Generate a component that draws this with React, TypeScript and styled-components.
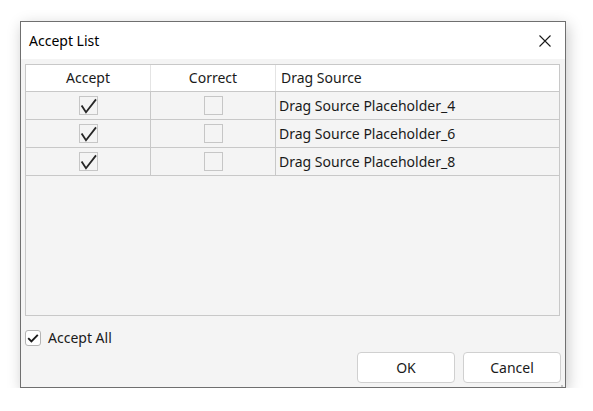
import React from 'react';
import styled, { createGlobalStyle } from 'styled-components';

const GlobalStyle = createGlobalStyle`
  html, body {
    margin: 0;
    padding: 0;
    background: #ffffff;
  }
  body {
    font-family: "Segoe UI", "Noto Sans", "Open Sans", sans-serif;
    color: #1a1a1a;
  }
`;

type Row = { accept: boolean; correct: boolean; source: string };

const rows: Row[] = [
  { accept: true, correct: false, source: 'Drag Source Placeholder_4' },
  { accept: true, correct: false, source: 'Drag Source Placeholder_6' },
  { accept: true, correct: false, source: 'Drag Source Placeholder_8' },
];

const CheckMark = () => (
  <svg width="17" height="17" viewBox="0 0 17 17">
    <path d="M1.6 8.4 L6 15.2 L16 2.4" fill="none" stroke="#262626" strokeWidth="1.8" />
  </svg>
);

const SmallCheck = () => (
  <svg width="14" height="14" viewBox="0 0 14 14">
    <path d="M2.2 7.2 L5.4 10.4 L11.8 3.8" fill="none" stroke="#1a1a1a" strokeWidth="1.9" />
  </svg>
);

const App = () => {
  return (
    <>
      <GlobalStyle />
      <Window>
        <TitleBar>
          <Title>Accept List</Title>
          <CloseButton>
            <svg width="12" height="12" viewBox="0 0 12 12">
              <path d="M0.5 0.5 L11.5 11.5 M11.5 0.5 L0.5 11.5" stroke="#1a1a1a" strokeWidth="1.1" />
            </svg>
          </CloseButton>
        </TitleBar>

        <Body>
          <Table>
            <HeaderRow>
              <HeadCell $center>Accept</HeadCell>
              <HeadCell $center>Correct</HeadCell>
              <HeadCell>Drag Source</HeadCell>
            </HeaderRow>
            {rows.map((r) => (
              <DataRow key={r.source}>
                <Cell $center>
                  <GridBox>{r.accept && <CheckMark />}</GridBox>
                </Cell>
                <Cell $center>
                  <GridBox>{r.correct && <CheckMark />}</GridBox>
                </Cell>
                <Cell>{r.source}</Cell>
              </DataRow>
            ))}
          </Table>

          <AcceptAll>
            <RoundBox>
              <SmallCheck />
            </RoundBox>
            Accept All
          </AcceptAll>

          <Buttons>
            <Button>OK</Button>
            <Button>Cancel</Button>
          </Buttons>
        </Body>

        <Grip>
          <svg width="10" height="10" viewBox="0 0 10 10">
            <rect x="7" y="1" width="2" height="2" fill="#c4c4c4" />
            <rect x="4" y="4" width="2" height="2" fill="#c4c4c4" />
            <rect x="7" y="4" width="2" height="2" fill="#c4c4c4" />
            <rect x="1" y="7" width="2" height="2" fill="#c4c4c4" />
            <rect x="4" y="7" width="2" height="2" fill="#c4c4c4" />
            <rect x="7" y="7" width="2" height="2" fill="#c4c4c4" />
          </svg>
        </Grip>
      </Window>
    </>
  );
};

export default App;

const Window = styled.div`
  position: relative;
  margin: 21px 0 0 20px;
  width: 546px;
  height: 367px;
  box-sizing: border-box;
  border: 1px solid #6f6f6f;
  background: #f4f4f4;
  box-shadow: 2px 4px 14px rgba(0, 0, 0, 0.22);
  display: flex;
  flex-direction: column;
`;

const TitleBar = styled.div`
  height: 37px;
  background: #ffffff;
  display: flex;
  align-items: center;
  justify-content: space-between;
  padding: 0 14px 0 8px;
`;

const Title = styled.span`
  font-size: 14px;
  color: #000;
  padding-bottom: 1px;
`;

const CloseButton = styled.div`
  width: 12px;
  height: 12px;
  display: flex;
`;

const Body = styled.div`
  flex: 1;
  display: flex;
  flex-direction: column;
  padding: 5px 4px 4px 4px;
`;

const Table = styled.div`
  height: 252px;
  box-sizing: border-box;
  margin-right: 1px;
  border: 1px solid #c8c8c8;
  background: #f4f4f4;
`;

const HeaderRow = styled.div`
  display: grid;
  grid-template-columns: 125px 125px 1fr;
  height: 27px;
  box-sizing: border-box;
  background: #ffffff;
  border-bottom: 1px solid #c8c8c8;
`;

const HeadCell = styled.div<{ $center?: boolean }>`
  display: flex;
  align-items: center;
  justify-content: ${(p) => (p.$center ? 'center' : 'flex-start')};
  padding-left: ${(p) => (p.$center ? '0' : '5px')};
  padding-bottom: 2px;
  font-size: 14px;
  color: #1a1a1a;
  border-right: 1px solid #e4e4e4;
  &:last-child {
    border-right: none;
  }
`;

const DataRow = styled.div`
  display: grid;
  grid-template-columns: 125px 125px 1fr;
  height: 28px;
  box-sizing: border-box;
  border-bottom: 1px solid #c8c8c8;
`;

const Cell = styled.div<{ $center?: boolean }>`
  display: flex;
  align-items: center;
  justify-content: ${(p) => (p.$center ? 'center' : 'flex-start')};
  padding-left: ${(p) => (p.$center ? '0' : '3px')};
  font-size: 14px;
  color: #1a1a1a;
  border-right: 1px solid #c8c8c8;
  &:last-child {
    border-right: none;
  }
`;

const GridBox = styled.div`
  width: 19px;
  height: 19px;
  box-sizing: border-box;
  border: 1px solid #c6c6c6;
  display: flex;
  align-items: center;
  justify-content: center;
`;

const AcceptAll = styled.div`
  display: flex;
  align-items: center;
  gap: 7px;
  margin-top: 12px;
  font-size: 14px;
  color: #1a1a1a;
`;

const RoundBox = styled.div`
  width: 16px;
  height: 16px;
  box-sizing: border-box;
  border: 1px solid #b4b4b4;
  border-radius: 3px;
  background: #ffffff;
  display: flex;
  align-items: center;
  justify-content: center;
`;

const Buttons = styled.div`
  margin-top: auto;
  display: flex;
  justify-content: flex-end;
  gap: 8px;
`;

const Button = styled.div`
  width: 98px;
  height: 31px;
  box-sizing: border-box;
  border: 1px solid #d0d0d0;
  border-radius: 4px;
  background: #ffffff;
  display: flex;
  align-items: center;
  justify-content: center;
  font-size: 14px;
  color: #1a1a1a;
`;

const Grip = styled.div`
  position: absolute;
  right: 1px;
  bottom: 0px;
  width: 10px;
  height: 10px;
`;
